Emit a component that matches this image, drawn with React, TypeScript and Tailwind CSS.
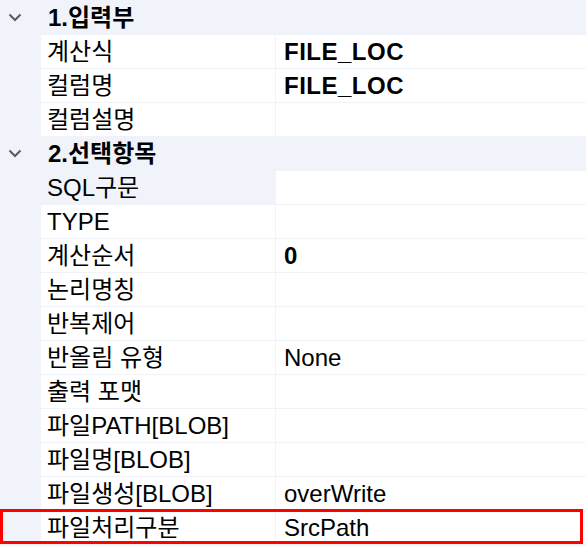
import React from 'react';

type Row =
  | { kind: 'group'; title: string }
  | { kind: 'prop'; label: string; value?: string; bold?: boolean; shaded?: boolean; marked?: boolean };

const rows: Row[] = [
  { kind: 'group', title: '1.입력부' },
  { kind: 'prop', label: '계산식', value: 'FILE_LOC', bold: true },
  { kind: 'prop', label: '컬럼명', value: 'FILE_LOC', bold: true },
  { kind: 'prop', label: '컬럼설명' },
  { kind: 'group', title: '2.선택항목' },
  { kind: 'prop', label: 'SQL구문', shaded: true },
  { kind: 'prop', label: 'TYPE' },
  { kind: 'prop', label: '계산순서', value: '0', bold: true },
  { kind: 'prop', label: '논리명칭' },
  { kind: 'prop', label: '반복제어' },
  { kind: 'prop', label: '반올림 유형', value: 'None' },
  { kind: 'prop', label: '출력 포맷' },
  { kind: 'prop', label: '파일PATH[BLOB]' },
  { kind: 'prop', label: '파일명[BLOB]' },
  { kind: 'prop', label: '파일생성[BLOB]', value: 'overWrite' },
  { kind: 'prop', label: '파일처리구분', value: 'SrcPath', marked: true },
];

const font = { fontFamily: '"Liberation Sans", "Noto Sans CJK KR", sans-serif' };

function Chevron() {
  return (
    <svg width="14" height="9" viewBox="0 0 14 9" className="ml-[8px]">
      <path d="M1.5 1.5 L7 7 L12.5 1.5" fill="none" stroke="#5a5a5a" strokeWidth="2" />
    </svg>
  );
}

export default function App() {
  return (
    <div
      className="w-[586px] h-[546px] overflow-hidden bg-[#f0f4fa] flex flex-col gap-px pt-px text-[24px] text-black"
      style={font}
    >
      {rows.map((row, i) =>
        row.kind === 'group' ? (
          <div key={i} className="h-[33px] shrink-0 flex items-center">
            <Chevron />
            <span className="ml-[26px] font-bold">{row.title}</span>
          </div>
        ) : (
          <div key={i} className="relative h-[33px] shrink-0 flex gap-px">
            <div className="w-[40px] shrink-0" />
            <div
              className={`w-[234px] shrink-0 flex items-center pl-[6px] whitespace-nowrap ${
                row.shaded ? 'bg-[#f0f4fa]' : 'bg-white'
              }`}
            >
              {row.label}
            </div>
            <div
              className={`flex-1 bg-white flex items-center pl-[8px] whitespace-nowrap ${
                row.bold ? 'font-bold tracking-[0.5px]' : ''
              }`}
            >
              {row.value}
            </div>
            {row.marked && (
              <div className="absolute left-0 top-[-2px] w-[583px] h-[35px] border-[3px] border-[#ff0000]" />
            )}
          </div>
        )
      )}
    </div>
  );
}
